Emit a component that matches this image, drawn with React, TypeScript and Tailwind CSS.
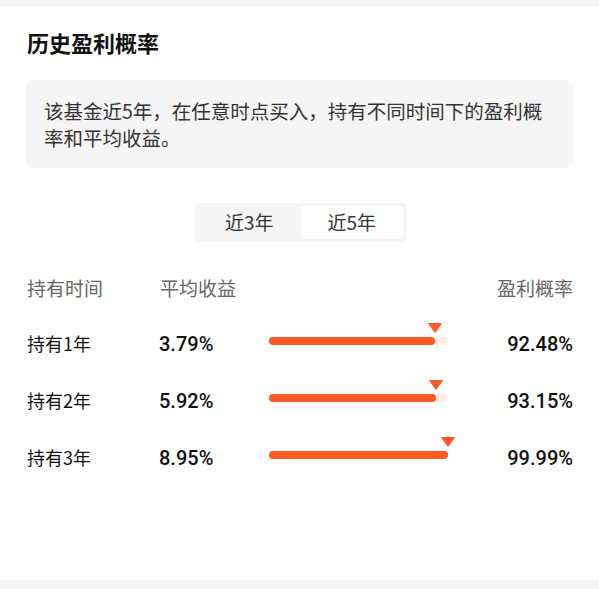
import React, { useState } from "react";

const rows = [
    { label: "持有1年", avg: "3.79%", rate: 92.48 },
    { label: "持有2年", avg: "5.92%", rate: 93.15 },
    { label: "持有3年", avg: "8.95%", rate: 99.99 },
];

const cjk = "font-['Noto_Sans_CJK_SC',sans-serif]";
const num = "font-['Roboto','Noto_Sans_CJK_SC',sans-serif]";

export default function App() {
    const [tab, setTab] = useState("5y");

    return (
        <div className={`h-[589px] w-full flex flex-col bg-white ${cjk}`}>
            <div className="h-[6px] bg-[#f4f4f4]" />

            <div className="flex-1 px-[26px]">
                {/* Title */}
                <h2 className="mt-[22px] pl-[1px] text-[22px] leading-[28px] font-bold text-[#111]">
                    历史盈利概率
                </h2>

                {/* Description */}
                <div className="mt-[24px] w-[547px] h-[88px] rounded-lg bg-[#f5f5f5] pl-[18px] pr-[10px] pt-[17px] text-[19.5px] leading-[27px] text-[#333]">
                    该基金近5年，在任意时点买入，持有不同时间下的盈利概
                    <br />
                    率和平均收益。
                </div>

                {/* Tabs */}
                <div className="mt-[35px] flex justify-center">
                    <div className="ml-[2px] flex w-[211px] h-[39px] rounded bg-[#f5f5f5] p-[3px]">
                        <button
                            onClick={() => setTab("3y")}
                            className={`flex-1 rounded text-[19px] text-[#333] ${tab === "3y" ? "bg-white" : ""}`}
                        >
                            近3年
                        </button>
                        <button
                            onClick={() => setTab("5y")}
                            className={`flex-1 rounded text-[19px] text-[#333] ${tab === "5y" ? "bg-white" : ""}`}
                        >
                            近5年
                        </button>
                    </div>
                </div>

                {/* Header */}
                <div className="mt-[32px] flex items-center h-[28px] text-[19px] text-[#666] pl-[1px]">
                    <span className="w-[133px]">持有时间</span>
                    <span>平均收益</span>
                    <span className="ml-auto">盈利概率</span>
                </div>

                {/* Rows */}
                <div className="mt-[13px] pl-[1px]">
                    {rows.map((r) => (
                        <div key={r.label} className="flex items-center h-[57px]">
                            <span className="w-[132px] text-[18px] text-[#111]">{r.label}</span>
                            <span className={`w-[110px] text-[20px] font-medium text-[#111] ${num}`}>
                                {r.avg}
                            </span>
                            <div className="relative -mt-[6px] h-2 w-[179px] rounded-full bg-[#fdebe5]">
                                <div
                                    className="h-2 rounded-full bg-[#ff5a24]"
                                    style={{ width: `${r.rate}%` }}
                                />
                                <svg
                                    width="14"
                                    height="10"
                                    viewBox="0 0 14 10"
                                    className="absolute bottom-[12px] -translate-x-1/2"
                                    style={{ left: `${r.rate}%` }}
                                >
                                    <path d="M0.5 0.5 H13.5 L7 9.5 Z" fill="#ff5a24" strokeLinejoin="round" stroke="#ff5a24" />
                                </svg>
                            </div>
                            <span className={`ml-auto text-[20px] font-medium text-[#111] ${num}`}>
                                {r.rate.toFixed(2)}%
                            </span>
                        </div>
                    ))}
                </div>
            </div>

            <div className="h-[9px] bg-[#f4f4f4]" />
        </div>
    );
}
